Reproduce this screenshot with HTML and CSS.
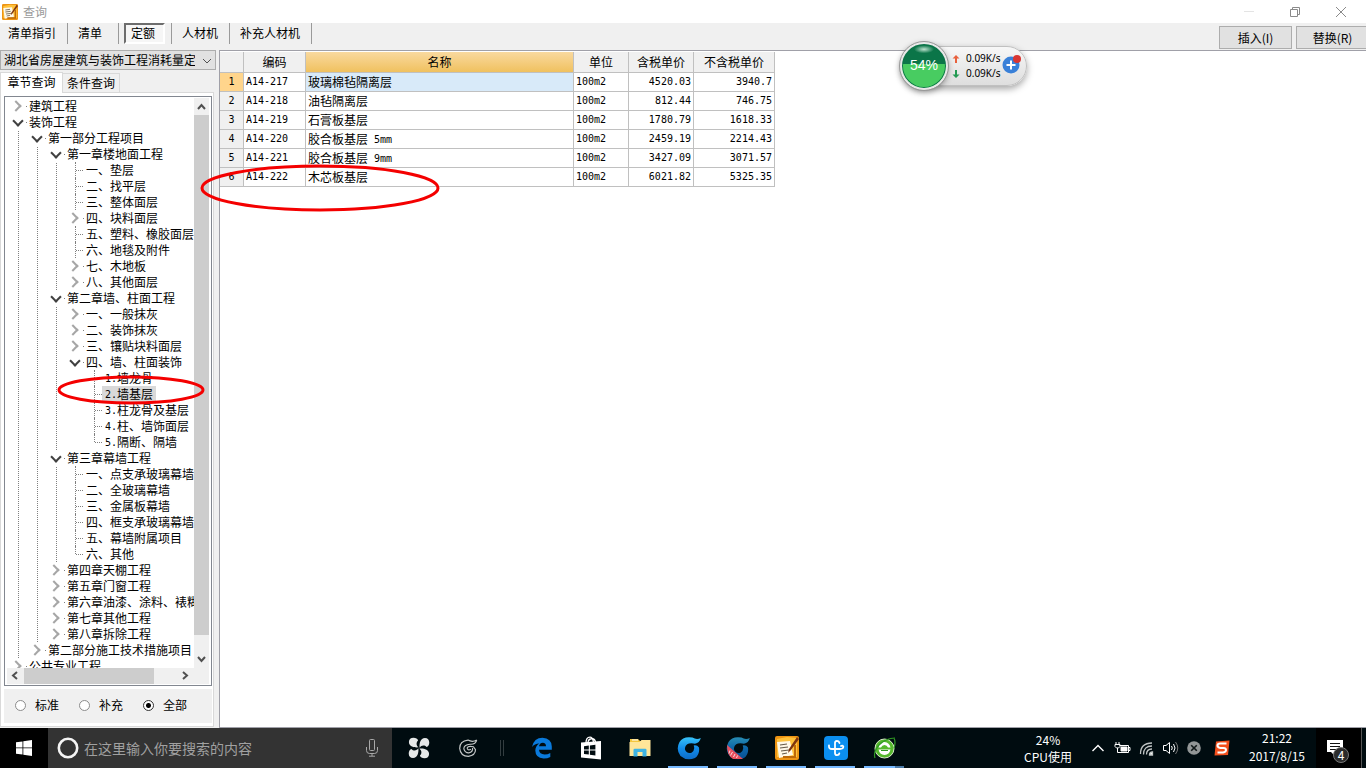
FILE: index.html
```html
<!DOCTYPE html>
<html lang="zh-CN">
<head>
<meta charset="utf-8">
<title>查询</title>
<link rel="stylesheet" href="styles.css">
</head>
<body>
<header class="titlebar">
  <svg class="app-icon" width="16" height="16" viewBox="0 0 24 24"><use href="#note-icon"/></svg>
  <h1>查询</h1>
  <div class="window-buttons">
    <button aria-label="最小化"><svg width="12" height="12"><path d="M1 5.500h10" stroke="#e4e4e4"/></svg></button>
    <button aria-label="还原"><svg width="12" height="12" fill="none" stroke="#8a8a8a"><path d="M1.500 3.500h7v7h-7zM3.500 3.500v-2h7v7h-2"/></svg></button>
    <button aria-label="关闭"><svg width="12" height="12" stroke="#8a8a8a"><path d="M1 1l10 10M11 1L1 11"/></svg></button>
  </div>
</header>

<nav class="toolbar">
  <div class="modes">
    <button class="first">清单指引</button>
    <button>清单</button>
    <button class="pressed"><span>定额</span></button>
    <button>人材机</button>
    <button>补充人材机</button>
  </div>
  <div class="actions">
    <button>插入(I)</button>
    <button>替换(R)</button>
  </div>
</nav>

<main class="main">
  <aside class="side">
    <div class="combo">
      <select aria-label="定额库"><option>湖北省房屋建筑与装饰工程消耗量定</option></select>
      <svg width="10" height="6" fill="none" stroke="#505050"><path d="M1 1l4 4l4-4"/></svg>
    </div>
    <div class="tabs">
      <button class="active">章节查询</button>
      <button>条件查询</button>
    </div>
    <div class="tab-panel">
      <div class="tree-box">
        <div class="tree-view">
          <ul class="tree">
            <li><div class="row"><button aria-label="展开"></button><span>建筑工程</span></div></li>
            <li><div class="row open"><button aria-label="折叠"></button><span>装饰工程</span></div>
              <ul>
                <li><div class="row open"><button aria-label="折叠"></button><span>第一部分工程项目</span></div>
                  <ul>
                    <li><div class="row open"><button aria-label="折叠"></button><span>第一章楼地面工程</span></div>
                      <ul>
                        <li><div class="row leaf"><span>一、垫层</span></div></li>
                        <li><div class="row leaf"><span>二、找平层</span></div></li>
                        <li><div class="row leaf"><span>三、整体面层</span></div></li>
                        <li><div class="row"><button aria-label="展开"></button><span>四、块料面层</span></div></li>
                        <li><div class="row leaf"><span>五、塑料、橡胶面层</span></div></li>
                        <li><div class="row leaf"><span>六、地毯及附件</span></div></li>
                        <li><div class="row"><button aria-label="展开"></button><span>七、木地板</span></div></li>
                        <li><div class="row"><button aria-label="展开"></button><span>八、其他面层</span></div></li>
                      </ul>
                    </li>
                    <li><div class="row open"><button aria-label="折叠"></button><span>第二章墙、柱面工程</span></div>
                      <ul>
                        <li><div class="row"><button aria-label="展开"></button><span>一、一般抹灰</span></div></li>
                        <li><div class="row"><button aria-label="展开"></button><span>二、装饰抹灰</span></div></li>
                        <li><div class="row"><button aria-label="展开"></button><span>三、镶贴块料面层</span></div></li>
                        <li><div class="row open"><button aria-label="折叠"></button><span>四、墙、柱面装饰</span></div>
                          <ul>
                            <li><div class="row leaf"><span><b>1.</b>墙龙骨</span></div></li>
                            <li><div class="row leaf"><span class="selected"><b>2.</b>墙基层</span></div></li>
                            <li><div class="row leaf"><span><b>3.</b>柱龙骨及基层</span></div></li>
                            <li><div class="row leaf"><span><b>4.</b>柱、墙饰面层</span></div></li>
                            <li><div class="row leaf"><span><b>5.</b>隔断、隔墙</span></div></li>
                          </ul>
                        </li>
                      </ul>
                    </li>
                    <li><div class="row open"><button aria-label="折叠"></button><span>第三章幕墙工程</span></div>
                      <ul>
                        <li><div class="row leaf"><span>一、点支承玻璃幕墙</span></div></li>
                        <li><div class="row leaf"><span>二、全玻璃幕墙</span></div></li>
                        <li><div class="row leaf"><span>三、金属板幕墙</span></div></li>
                        <li><div class="row leaf"><span>四、框支承玻璃幕墙</span></div></li>
                        <li><div class="row leaf"><span>五、幕墙附属项目</span></div></li>
                        <li><div class="row leaf"><span>六、其他</span></div></li>
                      </ul>
                    </li>
                    <li><div class="row"><button aria-label="展开"></button><span>第四章天棚工程</span></div></li>
                    <li><div class="row"><button aria-label="展开"></button><span>第五章门窗工程</span></div></li>
                    <li><div class="row"><button aria-label="展开"></button><span>第六章油漆、涂料、裱糊</span></div></li>
                    <li><div class="row"><button aria-label="展开"></button><span>第七章其他工程</span></div></li>
                    <li><div class="row"><button aria-label="展开"></button><span>第八章拆除工程</span></div></li>
                  </ul>
                </li>
                <li><div class="row"><button aria-label="展开"></button><span>第二部分施工技术措施项目</span></div></li>
              </ul>
            </li>
            <li><div class="row"><button aria-label="展开"></button><span>公共专业工程</span></div></li>
          </ul>
        </div>
        <div class="vscroll">
          <svg width="15" height="17"><path d="M4 11l3.500-4l3.500 4"/></svg>
          <div class="thumb"></div>
          <svg width="15" height="17"><path d="M4 6l3.500 4l3.500-4"/></svg>
        </div>
        <div class="hscroll">
          <svg width="17" height="15"><path d="M10 4l-4 3.500l4 3.500"/></svg>
          <div class="thumb"></div>
          <svg width="17" height="15"><path d="M7 4l4 3.500l-4 3.500"/></svg>
        </div>
      </div>
      <div class="scope">
        <label><input type="radio" name="scope">标准</label>
        <label><input type="radio" name="scope">补充</label>
        <label><input type="radio" name="scope" checked>全部</label>
      </div>
    </div>
  </aside>

  <section class="grid-panel">
    <table class="grid">
      <colgroup><col class="c-no"><col class="c-code"><col class="c-name"><col class="c-unit"><col class="c-tax"><col class="c-net"></colgroup>
      <thead>
        <tr><th></th><th>编码</th><th class="sorted">名称</th><th>单位</th><th>含税单价</th><th>不含税单价</th></tr>
      </thead>
      <tbody>
        <tr class="current"><th>1</th><td>A14-217</td><td class="name">玻璃棉毡隔离层</td><td>100m2</td><td class="num">4520.03</td><td class="num">3940.7</td></tr>
        <tr><th>2</th><td>A14-218</td><td class="name">油毡隔离层</td><td>100m2</td><td class="num">812.44</td><td class="num">746.75</td></tr>
        <tr><th>3</th><td>A14-219</td><td class="name">石膏板基层</td><td>100m2</td><td class="num">1780.79</td><td class="num">1618.33</td></tr>
        <tr><th>4</th><td>A14-220</td><td class="name">胶合板基层<b> 5mm</b></td><td>100m2</td><td class="num">2459.19</td><td class="num">2214.43</td></tr>
        <tr><th>5</th><td>A14-221</td><td class="name">胶合板基层<b> 9mm</b></td><td>100m2</td><td class="num">3427.09</td><td class="num">3071.57</td></tr>
        <tr><th>6</th><td>A14-222</td><td class="name">木芯板基层</td><td>100m2</td><td class="num">6021.82</td><td class="num">5325.35</td></tr>
      </tbody>
    </table>
  </section>
</main>

<footer class="taskbar">
  <button class="start" aria-label="开始"><svg width="16" height="16" fill="#fff"><path d="M0 2.300L6.500 1.400V7.500H0zM7.300 1.300L16 0V7.500H7.300zM0 8.300H6.500V14.600L0 13.700zM7.300 8.300H16V16L7.300 14.700z"/></svg></button>
  <label class="search">
    <svg width="22" height="22" fill="none"><circle cx="11" cy="11" r="9.200" stroke="#f4f4f4" stroke-width="2.600"/></svg>
    <input type="text" placeholder="在这里输入你要搜索的内容" aria-label="搜索">
    <svg width="14" height="18" fill="none" stroke="#a8a8a8"><rect x="4.500" y=".5" width="5" height="11" rx="1"/><path d="M1.500 8v3.500q0 3 3 3h5q3 0 3-3V8M7 14.500v2.500M4 17.200h6"/></svg>
  </label>
  <div class="apps">
    <button aria-label="风扇"><svg width="22" height="22" viewBox="0 0 24 24"><g fill="#e6e8e8"><g id="lobe"><path d="M11.600 11.300C7 11.800 1 10.500 1 5.500C1 2.500 3 .8 6 .8C8.500 .8 10.600 2 11 3.800C8.500 6 9 9.500 11.600 11.300z"/></g><use href="#lobe" transform="rotate(90 12 12)"/><use href="#lobe" transform="rotate(180 12 12)"/><use href="#lobe" transform="rotate(270 12 12)"/></g></svg></button>
    <button aria-label="广联达"><svg width="20" height="20" viewBox="0 0 24 24" fill="none" stroke="#c3c7c7" stroke-width="1.400"><path d="M22.500 2.500Q17 5.500 12 2.500Q2 3.500 2 12.500Q3 22 12.500 22Q21 20.500 21 14L18.500 10.500Q12 9 11 12Q11.500 15.500 15.500 13.500M22.500 2.500Q21 8 14.500 7.500Q7 8 7 13Q8.500 18 13 17.800Q18 17 17.500 12"/></svg></button>
    <span class="divider"></span>
    <button aria-label="Edge"><svg width="22" height="22" viewBox="0 0 22 22"><path fill="#0a7adb" d="M1 10Q3 .8 11.500.8Q20.500 1.300 20.800 9.500V12.800H8Q8.500 17.400 13.500 17.500Q16.700 17.500 19.300 15.900V20Q16.300 21.600 12.500 21.500Q4.500 21 4.300 13.500Q4.500 9 8.300 6.600Q3.500 7 1 10zM8 9.300H15Q15 5.800 11.800 5.700Q8.500 6 8 9.300z"/></svg></button>
    <button aria-label="应用商店"><svg width="22" height="24" viewBox="0 0 22 24"><path d="M6 7Q6 1.200 10 1.200Q12.500 1.200 13.500 6M8 7Q8 3 12 2.500Q15 3 15.500 6" fill="none" stroke="#fff" stroke-width="1.300"/><path fill="#fff" d="M1 6.500L21 5V23.500L1 21.500z"/><path d="M4 10.200l4.800-.6v4H4zM9.900 9.500l5.500-.7v4.800H9.900zM4 14.600h4.800v4L4 18zM9.900 14.600h5.500v4.900l-5.500-.7z" fill="#000c10"/></svg></button>
    <button aria-label="文件资源管理器"><svg width="22" height="20" viewBox="0 0 22 20"><path fill="#f5c73e" d="M1 1h8l2 2h10v5H1z"/><path fill="#ffe699" d="M.5 4h10l2-2h9v16H.5z"/><path fill="#3eb4e4" d="M4.500 18.500V12q0-1.200 1.200-1.200h10.600q1.200 0 1.200 1.200v6.500h-4V14h-5v4.500z"/><path d="M3 2h6" stroke="#fff"/></svg></button>
    <button class="running" aria-label="广联达云计价"><svg width="24" height="24" viewBox="0 0 24 24"><defs><linearGradient id="blue" x2="0" y2="1"><stop stop-color="#38c4fa"/><stop offset=".5" stop-color="#128ce9"/><stop offset="1" stop-color="#0d6cc8"/></linearGradient></defs><path id="swirl" fill="url(#blue)" d="M23.800 2Q19.500 4 15.500 1.500Q6 0 2.500 6Q-1.500 13.500 3.500 20Q10 25.500 18 22Q23 18.500 22 11.500Q20 8.700 16.700 9.400Q18.500 14 14.500 16.700Q9.500 18 8 13.500Q7.600 9 12 7.500Q15 7 18 7.700Q22.500 7 23.800 2z"/></svg></button>
    <button class="running" aria-label="广联达算量"><svg width="24" height="24" viewBox="0 0 24 24"><use href="#swirl" opacity=".7"/><path d="M1 9L17 23H7Q1 20 1 9z" fill="#e8505e"/><path d="M4 14.500l-1 3M6.500 16l-2 3.500M9 18l-1.500 3M11.500 19.500l-1 2.500" stroke="#ffd9dc"/></svg></button>
    <button class="running" aria-label="计价软件"><svg width="24" height="24" viewBox="0 0 24 24"><g id="note-icon"><rect width="24" height="24" rx="2" fill="#ed9413"/><path d="M2 3l10-2l10 1v19H2z" fill="#ffc23b"/><path d="M2 6l13-1l3 14l-14 3z" fill="#fff8e7"/><path d="M5 9l7-1M5 12l8-1M6 15l8-1M7 18l5-1" stroke="#665b4a" stroke-width="1.200"/><path d="M22 1L14 13l-1 4l3-3L24 3z" fill="#7d3510"/><path d="M20 9v12H8" stroke="#bd6808" stroke-width="2" fill="none"/></g></svg></button>
    <button class="running" aria-label="工具"><svg width="24" height="24" viewBox="0 0 24 24"><rect width="24" height="24" rx="4" fill="#0b8ff0"/><path d="M15.500 7Q15 4.800 12.800 4.800Q11 5 11 7V17Q11 19.200 13 19.200Q15 19.200 15.300 17.500M5 9.500Q4.500 13 8 13H16Q19.500 13 19.300 10.500Q18.500 9 17 10" fill="none" stroke="#fff" stroke-width="1.800" stroke-linecap="round"/></svg></button>
    <button class="running grouped" aria-label="浏览器"><svg width="24" height="24" viewBox="0 0 24 24"><circle cx="11.500" cy="12.500" r="9.500" fill="#56b82e" stroke="#d9edca"/><path d="M5.500 11.500Q6.500 6 11.500 6Q16.500 6.500 17.500 11.500H15Q14 9 11.500 9T8 11.500zM5.500 13.500H17.500Q16.500 18.500 11.500 19Q6.500 18.500 5.500 13.500z" fill="#fff"/><path d="M8 14.500h7M2 22Q0 16 6 9Q13 2 22 2M21 2Q23 6 21 12" stroke="#2f9824" stroke-width="1.200" fill="none"/></svg></button>
  </div>
  <div class="tray">
    <div class="cpu">24%<br>CPU使用</div>
    <button aria-label="显示隐藏的图标"><svg width="14" height="10" fill="none" stroke="#fff" stroke-width="1.400"><path d="M1.500 8L7 2.500L12.500 8"/></svg></button>
    <button aria-label="电池"><svg width="17" height="14" fill="none" stroke="#fff"><path d="M5.500 4.500h9v7h-9M14.500 6.500h1.500v3h-1.500M2 1v2M5 1v2M1 3.500h5v2l-1.500 1.500h-2L1 5.500zM3.500 7v4.500H6"/><path d="M7 6h6v4H7z" fill="#fff"/></svg></button>
    <button aria-label="无线网络"><svg width="15" height="15" fill="none" stroke="#bfc4c4" stroke-width="1.300"><path d="M1.500 13Q1.500 2 13 2M4.500 13.500Q4.500 5 13 5M7.500 13.500Q7.500 8 13 8" /><path d="M10.500 14Q10.500 11 13.500 11V14z" fill="#fff"/></svg></button>
    <button aria-label="音量"><svg width="17" height="14" fill="none" stroke="#fff"><path d="M1.500 4.500h2.500l3.500-3v11L4 9.500H1.500zM9.500 5q1.500 2 0 4M11.500 3q3 4 0 8"/><path d="M13.500 1q4.500 6 0 12" stroke="#777"/></svg></button>
    <button aria-label="状态"><svg width="14" height="14"><circle cx="7" cy="7" r="6.800" fill="#929696"/><path d="M4.200 4.200l5.600 5.600M9.800 4.200L4.200 9.800" stroke="#101818" stroke-width="1.600"/></svg></button>
    <button class="ime" aria-label="搜狗输入法"><svg width="16" height="16"><path d="M2 1.500L15.500.5L14 15L.5 15.500z" fill="#f3501d"/><path d="M12.500 3.500H6.500Q3.500 3.500 3.500 5.500T6.500 8H9.500Q12 8 12 10T9 12.500H3.500" fill="none" stroke="#fff" stroke-width="2"/></svg></button>
    <time>21:22<br>2017/8/15</time>
    <button class="notice" aria-label="通知">
      <svg width="18" height="20"><path d="M1 2h16v12H8v3l-3-3H1z" fill="#fff"/><path d="M4 5.500h10M4 8.500h10M4 11.500h6" stroke="#111"/></svg>
      <span>4</span>
    </button>
  </div>
</footer>

<div class="speed">
  <div class="ball">54%</div>
  <div class="rates">
    <p><svg width="8" height="8" fill="#e8603c"><path d="M4 0l3.500 3.500H5V8H3V3.500H.5z"/></svg>0.09K/s</p>
    <p><svg width="8" height="8" fill="#249a53"><path d="M4 8l3.500-3.500H5V0H3V4.500H.5z"/></svg>0.09K/s</p>
  </div>
  <button class="plus" aria-label="加速"><svg width="22" height="22"><circle cx="9" cy="12" r="8.500" fill="#3980d8"/><path d="M9 7.500v9M4.500 12h9" stroke="#fff" stroke-width="2"/><circle cx="15" cy="6" r="4" fill="#d93632"/></svg></button>
</div>

<svg class="mark mark-row" width="244" height="48" fill="none" stroke="#f40000" stroke-width="3"><ellipse cx="122" cy="24" rx="118" ry="22"/></svg>
<svg class="mark mark-node" width="150" height="32" fill="none" stroke="#f40000" stroke-width="3"><ellipse cx="75" cy="16" rx="72" ry="13"/></svg>
</body>
</html>
```
FILE: styles.css
```css
* { box-sizing: border-box; }

body {
  margin: 0;
  height: 100vh;
  display: flex;
  flex-direction: column;
  overflow: hidden;
  position: relative;
  background: #f0f0f0;
  color: #000;
  font: 12px/16px "Noto Sans CJK SC", sans-serif;
}

button, input, select { font: inherit; color: inherit; margin: 0; padding: 0; }
button { border: 0; background: none; display: flex; align-items: center; justify-content: center; }
svg { display: block; flex: none; }
ul { list-style: none; margin: 0; padding: 0; }
b { font: 10px/12px "DejaVu Sans Mono", monospace; vertical-align: 1px; white-space: pre; }

/* Title bar */
.titlebar { flex: none; height: 23px; display: flex; align-items: center; gap: 5px; padding-left: 2px; background: #fff; }
.titlebar h1 { margin: 0; font-size: 12px; font-weight: 400; color: #999; }
.window-buttons { margin-left: auto; display: flex; }
.window-buttons button { width: 46px; height: 20px; }
.window-buttons button:last-child { margin-right: 2px; }

/* Toolbar */
.toolbar { flex: none; height: 27px; display: flex; justify-content: space-between; overflow: hidden; }
.modes { display: flex; height: 21px; }
.modes button { min-width: 51px; padding: 0 11px 2px 10px; justify-content: flex-start; border-right: 1px solid #9a9a9a; }
.modes .first { padding-left: 8px; }
.modes .pressed { padding: 0 6px 0 5px; }
.modes .pressed span { padding: 0 8px 1px 5px; border: 2px solid; border-color: #6d6d6d #fff #fff #6d6d6d; background: #f6f6f6; }
.actions { display: flex; gap: 4px; padding: 3px 0 1px; margin-right: -3px; }
.actions button { width: 73px; background: #e1e1e1; border: 1px solid #adadad; }

/* Main area */
.main { flex: 1; min-height: 0; display: flex; }
.side { width: 219px; flex: none; display: flex; flex-direction: column; padding: 0 5px 1px 0; }
.combo { position: relative; flex: none; margin-right: -2px; }
.combo select { display: block; width: 100%; height: 20px; padding: 0 20px 0 3px; border: 1px solid #adadad; border-radius: 0; background: #e1e1e1; appearance: none; }
.combo svg { position: absolute; right: 4px; top: 8px; }
.tabs { flex: none; display: flex; align-items: flex-end; height: 22px; padding-top: 2px; }
.tabs button { height: 19px; width: 57px; border: 1px solid #d9d9d9; border-left: 0; border-bottom: 0; }
.tabs .active { height: 21px; width: 63px; margin-bottom: -1px; padding-bottom: 2px; position: relative; background: #fff; border-left: 1px solid #d9d9d9; }
.tab-panel { flex: 1; min-height: 0; display: flex; flex-direction: column; padding: 3px 1px 3px 3px; background: #fff; border: 1px solid #d9d9d9; }

/* Chapter tree */
.tree-box { flex: 1; min-height: 0; display: grid; grid-template: minmax(0, 1fr) 16px / minmax(0, 1fr) 15px; padding: 1px 2px; border: 1px solid #828790; background: #fff; }
.tree-view { overflow: hidden; padding-left: 3px; }
.tree li { position: relative; white-space: nowrap; }
.tree ul { margin-left: 19px; }
.tree li::before { content: ""; position: absolute; left: 8px; top: 0; bottom: 0; border-left: 1px dotted #808080; }
.tree li:last-child::before { bottom: auto; height: 8px; }
.row { position: relative; display: flex; height: 16px; }
.row::before { content: ""; position: absolute; top: 8px; left: 16px; width: 1px; border-top: 1px dotted #808080; }
.row.leaf { padding-left: 16px; }
.row.leaf::before { left: 9px; width: 7px; }
.row span { flex: none; padding: 0 3px; }
.row .selected { background: #d9d9d9; }
.row button { flex: none; width: 16px; background: #fff; }
.row button::before { content: ""; width: 6px; height: 6px; margin-right: 5px; border: solid #a6a6a6; border-width: 2px 2px 0 0; transform: rotate(45deg); }
.row.open button::before { border-color: #404040; margin: 0 1px 3px 0; transform: rotate(135deg); }

/* Scroll bars */
.vscroll, .hscroll { display: flex; background: #f0f0f0; }
.vscroll { flex-direction: column; }
.hscroll { grid-column: 1 / 3; padding-right: 16px; justify-content: space-between; }
.vscroll svg, .hscroll svg { fill: none; stroke: #505050; stroke-width: 2; }
.thumb { background: #cdcdcd; }
.vscroll .thumb { flex: 1; margin-bottom: 16px; }
.hscroll .thumb { width: 130px; margin-right: auto; }

/* Scope radios */
.scope { flex: none; height: 34px; margin-top: 3px; display: flex; align-items: center; gap: 16px; padding: 0 0 2px 11px; background: #f0f0f0; }
.scope label { display: flex; align-items: center; width: 48px; gap: 9px; white-space: nowrap; }
.scope input { appearance: none; flex: none; width: 11px; height: 11px; border: 1px solid #8c8c8c; border-radius: 50%; background: #fff; }
.scope input:checked { background: radial-gradient(circle, #000 2px, #fff 3px); border-color: #333; }

/* Result grid */
.grid-panel { flex: 1; min-width: 0; padding-top: 1px; border: 1px solid #a0a0a8; border-right: 0; background: #fff; }
.grid { width: 555px; table-layout: fixed; border-spacing: 0; font: 10px/14px "DejaVu Sans Mono", monospace; }
.c-no { width: 24px; }
.c-code { width: 62px; }
.c-name { width: 268px; }
.c-unit { width: 55px; }
.c-tax { width: 65px; }
.c-net { width: 81px; }
.grid th, .grid td { height: 19px; padding: 0 2px; border: solid #c0c0c0; border-width: 0 1px 1px 0; font-weight: 400; white-space: nowrap; }
.grid th { background: #f0f0f0; }
.grid thead th { height: 21px; font: 12px/16px "Noto Sans CJK SC", sans-serif; }
.grid thead .sorted { background: linear-gradient(#f9d99f, #f0c15f); }
.grid .name { font: 12px/16px "Noto Sans CJK SC", sans-serif; }
.grid .num { text-align: right; }
.grid .current th { background: #ffd58c; }
.grid .current .name { background: #d8eaf9; }

/* Taskbar */
.taskbar { flex: none; height: 40px; display: flex; background: #000c10; color: #fff; }
.start { width: 48px; background: #000; }
.search { width: 344px; display: flex; align-items: center; gap: 5px; padding: 0 13px 0 9px; background: #333; }
.search input { flex: 1; min-width: 0; border: 0; background: none; font-size: 14px; outline: 0; }
.search input::placeholder { color: #a0a0a0; opacity: 1; }
.apps { display: flex; padding-left: 2px; }
.apps button { width: 49px; position: relative; }
.apps .divider { width: 4px; height: 16px; margin: 12px 13px 12px 8px; border: solid #333d40; border-width: 0 1px; }
.running::after { content: ""; position: absolute; left: 4px; right: 5px; bottom: 0; height: 2px; background: #76b9ff; }
.grouped::after { background: linear-gradient(to right, #76b9ff 31px, #4b7ba8 31px); }
.tray { margin-left: auto; display: flex; align-items: stretch; }
.tray button { width: 24px; }
.cpu, .tray time { text-align: center; line-height: 17px; padding-top: 3px; }
.cpu { width: 52px; margin-right: 12px; }
.tray .ime { width: 32px; }
.tray time { width: 78px; line-height: 18px; padding-top: 1px; }
.tray .notice { width: 46px; margin-right: 4px; padding-right: 8px; position: relative; background: #000; border-right: 1px solid #555; }
.notice span { position: absolute; left: 17px; top: 19px; width: 16px; height: 16px; border: 1px solid #777; border-radius: 50%; background: #2b2b2b; line-height: 14px; }

/* Floating speed monitor */
.speed { position: absolute; left: 903px; top: 46px; width: 124px; height: 40px; display: flex; align-items: center; border: 1px solid #c0c0c0; border-radius: 20px; background: linear-gradient(#f7f7f7, #dedede); box-shadow: 0 3px 7px rgba(0, 0, 0, 0.35); }
.ball { flex: none; width: 48px; height: 48px; margin-left: -4px; border: 2px solid #e8e8e8; outline: 1px solid #999; border-radius: 50%; background: radial-gradient(ellipse 10px 4px at 50% 12%, #bfe3d0, transparent), linear-gradient(#0b7548 45%, #48cc61 46%); box-shadow: inset 0 0 0 1px #0b7548, 0 2px 6px rgba(0, 0, 0, 0.4); color: #fff; text-align: center; font: 14px/42px "Liberation Sans", sans-serif; }
.rates { margin-left: 4px; font: 10px/15px "Noto Sans", sans-serif; }
.rates p { margin: 0; display: flex; align-items: center; gap: 6px; }
.plus { margin: 0 0 4px 1px; }

/* Hand-drawn highlights */
.mark { position: absolute; pointer-events: none; }
.mark-row { left: 198px; top: 164px; }
.mark-node { left: 56px; top: 374px; }
```
